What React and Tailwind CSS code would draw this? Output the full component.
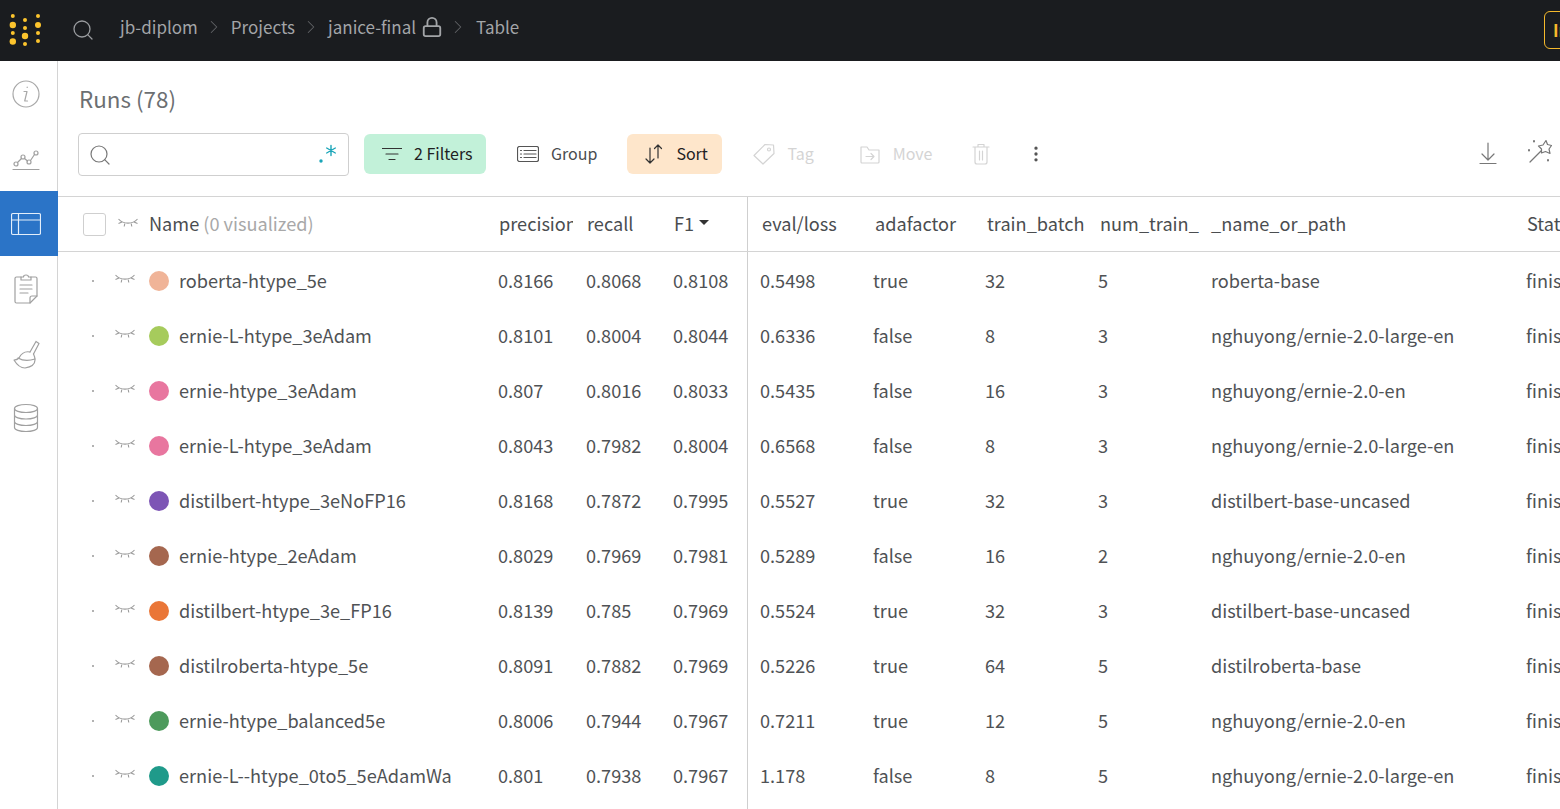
import { ChevronRight, Lock, Search, MoreVertical } from 'lucide-react';

const rows = [
  ['roberta-htype_5e', 'bg-[#f0b498]', '0.8166', '0.8068', '0.8108', '0.5498', 'true', '32', '5', 'roberta-base'],
  ['ernie-L-htype_3eAdam', 'bg-[#a6cb5c]', '0.8101', '0.8004', '0.8044', '0.6336', 'false', '8', '3', 'nghuyong/ernie-2.0-large-en'],
  ['ernie-htype_3eAdam', 'bg-[#e8769f]', '0.807', '0.8016', '0.8033', '0.5435', 'false', '16', '3', 'nghuyong/ernie-2.0-en'],
  ['ernie-L-htype_3eAdam', 'bg-[#e8769f]', '0.8043', '0.7982', '0.8004', '0.6568', 'false', '8', '3', 'nghuyong/ernie-2.0-large-en'],
  ['distilbert-htype_3eNoFP16', 'bg-[#7d55b5]', '0.8168', '0.7872', '0.7995', '0.5527', 'true', '32', '3', 'distilbert-base-uncased'],
  ['ernie-htype_2eAdam', 'bg-[#a5674f]', '0.8029', '0.7969', '0.7981', '0.5289', 'false', '16', '2', 'nghuyong/ernie-2.0-en'],
  ['distilbert-htype_3e_FP16', 'bg-[#ea7637]', '0.8139', '0.785', '0.7969', '0.5524', 'true', '32', '3', 'distilbert-base-uncased'],
  ['distilroberta-htype_5e', 'bg-[#a5674f]', '0.8091', '0.7882', '0.7969', '0.5226', 'true', '64', '5', 'distilroberta-base'],
  ['ernie-htype_balanced5e', 'bg-[#4d9a5c]', '0.8006', '0.7944', '0.7967', '0.7211', 'true', '12', '5', 'nghuyong/ernie-2.0-en'],
  ['ernie-L--htype_0to5_5eAdamWa', 'bg-[#1f9a8a]', '0.801', '0.7938', '0.7967', '1.178', 'false', '8', '5', 'nghuyong/ernie-2.0-large-en'],
];

function Logo() {
  const dots = [
    [12.800, 16, 2], [12.800, 25, 3.200], [12.800, 33, 2], [12.800, 41.500, 3.200],
    [25, 20, 2], [25, 28, 2], [25, 36, 3.200], [25, 44, 2],
    [38, 16, 2], [38, 25, 3], [38, 33, 2], [38, 41, 2],
  ];
  return (
    <svg width="48" height="61" viewBox="0 0 48 61" className="shrink-0">
      {dots.map(([x, y, r]) => <circle key={`${x}-${y}`} cx={x} cy={y} r={r} fill="#fcc42d" />)}
    </svg>
  );
}

function Eye({ className = '' }) {
  return (
    <svg width="20" height="10" viewBox="0 0 20 10" fill="none" stroke="#9a9a9a" strokeWidth="1.100" className={`shrink-0 ${className}`}>
      <path d="M0.500 1c5 5.500 14 5.500 19 0" />
      <path d="M0.500 5.500l3.500-1.500M19.500 5.500l-3.500-1.500M6.800 5.500l-.6 3M13.200 5.500l.6 3" />
    </svg>
  );
}

function Stroke({ w = 24, h = 24, stroke = '#8f8f8f', children, className = '' }) {
  return (
    <svg width={w} height={h} viewBox={`0 0 ${w} ${h}`} fill="none" stroke={stroke} strokeWidth="1.2" strokeLinecap="round" strokeLinejoin="round" className={`shrink-0 ${className}`}>
      {children}
    </svg>
  );
}

function Sidebar() {
  return (
    <aside className="w-[58px] shrink-0 flex flex-col border-r border-[#d4d4d4] bg-white">
      <div className="h-[66px] flex items-center justify-center pr-[6px]">
        <Stroke w={30} h={30} stroke="#a8a8a8"><circle cx="15" cy="15" r="13" /><path d="M16.200 8v.5M13 12.500h3l-2.300 9.500h2.800" /></Stroke>
      </div>
      <div className="h-[64px] flex items-center justify-center pr-[6px]">
        <Stroke w={28} h={26} stroke="#a0a0a0">
          <circle cx="4" cy="18" r="2" /><circle cx="11" cy="11" r="2" /><circle cx="17" cy="16" r="2" /><circle cx="24" cy="7" r="2" />
          <path d="M5.500 16.500l4-4M12.500 12.500l3 2.500M18.500 14.500l4-6M1 23.500h26" />
        </Stroke>
      </div>
      <div className="h-[65px] flex items-center justify-center pr-[6px] bg-[#2b74c7] w-[58px]">
        <Stroke w={30} h={24} stroke="#e3eefa">
          <rect x="0.500" y="1.500" width="29" height="21" rx="1.500" /><path d="M0.500 8h29M7.500 1.500v21" />
        </Stroke>
      </div>
      <div className="h-[65px] flex items-center justify-center pr-[6px]">
        <Stroke w={24} h={30} stroke="#a0a0a0">
          <path d="M7 3H2.500A1.500 1.500 0 0 0 1 4.500v23A1.500 1.500 0 0 0 2.500 29H16l7-7V4.500A1.500 1.500 0 0 0 21.500 3H17" />
          <path d="M7 6V3h2.500a2.500 2 0 0 1 5 0H17v3zM6 11h12M6 15h12M6 19h8M16 29v-5a2 2 0 0 1 2-2h5" />
        </Stroke>
      </div>
      <div className="h-[65px] flex items-center justify-center pr-[6px]">
        <Stroke w={28} h={30} stroke="#a0a0a0">
          <path d="M24 2.500l3 2-5.500 10.500M24 2.500L18 13" />
          <path d="M18 13c-5-1-9 2-11 6-1 1-3 2-5 2 3 5 7 8 11 8 6-1 10-4 10-8 0-2-.5-4-1.500-6" />
          <path d="M6 19c5 3 11 3 17 1" />
        </Stroke>
      </div>
      <div className="h-[64px] flex items-center justify-center pr-[6px]">
        <Stroke w={26} h={30} stroke="#a0a0a0">
          <ellipse cx="13" cy="5.500" rx="11.500" ry="4" />
          <path d="M1.500 5.500v19c0 2.200 5 4 11.500 4s11.500-1.800 11.500-4v-19M1.500 12c0 2.200 5 4 11.500 4s11.500-1.800 11.500-4M1.500 18.500c0 2.200 5 4 11.500 4s11.500-1.800 11.500-4" />
        </Stroke>
      </div>
    </aside>
  );
}

function TopBar() {
  return (
    <header className="h-[61px] shrink-0 bg-[#1a1c1f] flex items-center text-[17px] text-[#a3a5a8] relative">
      <Logo />
      <Search size={24} strokeWidth={1.300} className="ml-[23px] mb-[2px] text-[#9a9c9f]" />
      <nav className="ml-[25px] mb-[7px] flex items-center">
        <span>jb-diplom</span>
        <ChevronRight size={22} strokeWidth={1.100} className="ml-[5px] mr-[6px] text-[#606265]" />
        <span>Projects</span>
        <ChevronRight size={22} strokeWidth={1.100} className="ml-[5px] mr-[6px] text-[#606265]" />
        <span>janice-final</span>
        <Lock size={22} strokeWidth={2} className="ml-[5px] text-[#a3a5a8]" />
        <ChevronRight size={22} strokeWidth={1.100} className="ml-[4px] mr-[7px] text-[#606265]" />
        <span>Table</span>
      </nav>
      <div className="absolute left-[1544px] top-[11px] w-[60px] h-[38px] border border-[#f5b92c] rounded-md pl-[8px] text-[#f5b92c] font-semibold flex items-center">In</div>
    </header>
  );
}

function Toolbar() {
  return (
    <div className="h-[85px] flex items-center pl-[20px] text-[16px]">
      <div className="w-[271px] h-[43px] mt-[2px] rounded border border-[#cfcfcf] flex items-center justify-between pl-[9px] pr-[10px]">
        <Search size={24} strokeWidth={1.200} className="text-[#777]" />
        <svg width="20" height="22" viewBox="0 0 20 22" fill="none" stroke="#1aa5b8" strokeWidth="1.400" strokeLinecap="round">
          <circle cx="3" cy="17" r="1.700" fill="#1aa5b8" stroke="none" />
          <path d="M13 1.500v10M8.700 4l8.600 5M17.300 4l-8.600 5" />
        </svg>
      </div>
      <div className="ml-[15px] w-[122px] h-[40px] rounded-md bg-[#c2f1d9] flex items-center pl-[18px] text-[#1f2123]">
        <Stroke w={20} h={14} stroke="#333"><path d="M0.500 1.500h19M4 7h12M7 12.500h6" /></Stroke>
        <span className="ml-[12px] mb-[2px]">2 Filters</span>
      </div>
      <div className="ml-[31px] flex items-center text-[#4a4d50]">
        <Stroke w={22} h={16} stroke="#555"><rect x="0.500" y="0.500" width="21" height="15" rx="2" /><path d="M3.500 4.500h1M3.500 8h1M3.500 11.500h1M7 4.500h12M7 8h12M7 11.500h12" /></Stroke>
        <span className="ml-[12px] mb-[2px]">Group</span>
      </div>
      <div className="ml-[30px] w-[95px] h-[40px] rounded-md bg-[#fee6cb] flex items-center pl-[18px] text-[#1f2123]">
        <Stroke w={18} h={20} stroke="#333"><path d="M5 4v15M1 15l4 4 4-4M13 1v13M9.500 4.500L13 1l3.500 3.500" /></Stroke>
        <span className="ml-[13px] mb-[2px]">Sort</span>
      </div>
      <div className="ml-[31px] flex items-center text-[#d4d4d4]">
        <Stroke w={22} h={22} stroke="#d4d4d4"><path d="M1 12.500L12 1.500l8.500.5.500 8.500L10 21z" /><circle cx="16" cy="6.500" r="1.500" /></Stroke>
        <span className="ml-[12px] mb-[2px]">Tag</span>
      </div>
      <div className="ml-[46px] flex items-center text-[#d4d4d4]">
        <Stroke w={20} h={20} stroke="#d4d4d4"><path d="M1 3h6l2 3h10v12a1 1 0 0 1-1 1H2a1 1 0 0 1-1-1zM6 12.500h8M11 9.500l3 3-3 3" /></Stroke>
        <span className="ml-[13px] mb-[2px]">Move</span>
      </div>
      <div className="ml-[40px]">
        <Stroke w={18} h={22} stroke="#d4d4d4"><path d="M1 4h16M3 4v15a2 2 0 0 0 2 2h8a2 2 0 0 0 2-2V4M6 4V1.500h6V4M7.500 8v9M10.500 8v9" /></Stroke>
      </div>
      <MoreVertical size={20} strokeWidth={2} className="ml-[36px] text-[#555]" />
      <div className="ml-auto mr-[8px] flex items-center gap-[28px]">
        <Stroke w={20} h={24} stroke="#777"><path d="M10 1v17M4 12l6 6 6-6M2 21.500h16" /></Stroke>
        <Stroke w={26} h={24} stroke="#777" className="mb-[4px]">
          <path d="M4 22L15 11" />
          <path d="M20 .500l1.500 4 4 1-2.500 3.500 1 4.500-4.500-2-4 1.500v-4l-3-3 4.500-1z" />
          <path d="M3 10v.5M8 1v.5M22 20v.5" strokeWidth="2" />
        </Stroke>
      </div>
    </div>
  );
}

function TableHead() {
  return (
    <div className="h-[56px] flex items-center border-y border-[#d4d4d4] text-[18.150px] text-[#4a4d50]">
      <div className="w-[690px] shrink-0 h-full flex items-center border-r border-[#cfcfcf]">
        <div className="ml-[25px] w-[23px] h-[23px] shrink-0 rounded-[3px] border border-[#cfcfcf]" />
        <Eye className="ml-[12px] mb-[2px]" />
        <span className="ml-[11px] w-[350px] shrink-0">Name <span className="text-[#a8a8a8]">(0 visualized)</span></span>
        <span className="w-[74px] mr-[14px] shrink-0 overflow-hidden">precision</span>
        <span className="w-[87px] shrink-0">recall</span>
        <span className="flex items-center">F1<span className="ml-[5px] mt-[-3px] w-0 h-0 border-x-[5px] border-x-transparent border-t-[5px] border-t-[#333]" /></span>
      </div>
      <span className="ml-[14px] w-[113px] shrink-0">eval/loss</span>
      <span className="w-[112px] shrink-0">adafactor</span>
      <span className="w-[113px] shrink-0">train_batch</span>
      <span className="w-[111px] shrink-0">num_train_</span>
      <span className="w-[316px] shrink-0">_name_or_path</span>
      <span className="shrink-0">Status</span>
    </div>
  );
}

function Row({ name, color, vals }) {
  return (
    <div className="h-[55px] shrink-0 flex items-center pt-[2px] text-[18.150px] text-[#4f5255]">
      <div className="w-[690px] shrink-0 self-stretch -mt-[2px] pt-[2px] flex items-center border-r border-[#cfcfcf]">
        <span className="ml-[34px] w-[2px] h-[2px] shrink-0 rounded-full bg-[#999]" />
        <Eye className="ml-[21px] mb-[3px]" />
        <span className={`ml-[14px] w-[20px] h-[20px] shrink-0 rounded-full ${color}`} />
        <span className="ml-[10px] w-[319px] shrink-0 whitespace-nowrap">{name}</span>
        <span className="w-[88px] shrink-0">{vals[0]}</span>
        <span className="w-[87px] shrink-0">{vals[1]}</span>
        <span>{vals[2]}</span>
      </div>
      <span className="ml-[12px] w-[113px] shrink-0">{vals[3]}</span>
      <span className="w-[112px] shrink-0">{vals[4]}</span>
      <span className="w-[113px] shrink-0">{vals[5]}</span>
      <span className="w-[113px] shrink-0">{vals[6]}</span>
      <span className="w-[315px] shrink-0">{vals[7]}</span>
      <span className="shrink-0">finished</span>
    </div>
  );
}

export default function App() {
  return (
    <div className="w-[1560px] h-[809px] overflow-hidden flex flex-col bg-white leading-normal font-['Noto_Sans_CJK_SC',sans-serif]">
      <TopBar />
      <div className="flex flex-1 min-h-0">
        <Sidebar />
        <main className="flex-1 min-w-0 overflow-hidden">
          <div className="h-[50px] pt-[23px] pl-[21px] text-[22.400px] leading-[28px] text-[#6c6f72]">Runs (78)</div>
          <Toolbar />
          <TableHead />
          {rows.map((r) => (
            <Row key={r[0] + r[2]} name={r[0]} color={r[1]} vals={r.slice(2)} />
          ))}
          <div className="w-[690px] h-[20px] border-r border-[#cfcfcf]" />
        </main>
      </div>
    </div>
  );
}
